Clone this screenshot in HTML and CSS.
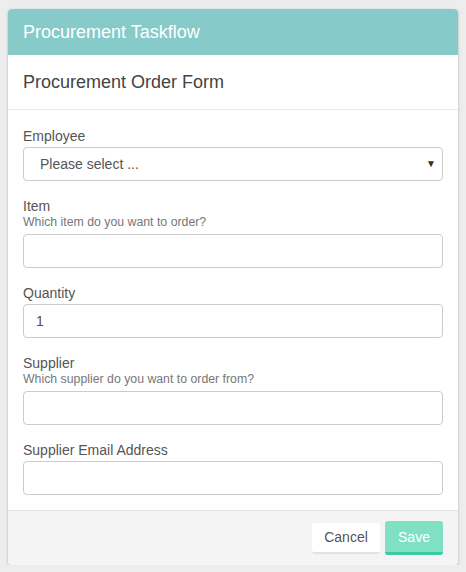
FILE: index.html
```html
<!DOCTYPE html>
<html>
<head>
<meta charset="utf-8">
<link rel="stylesheet" href="styles.css">
</head>
<body>
<div class="card">
  <div class="card-header">Procurement Taskflow</div>
  <div class="card-subheader">Procurement Order Form</div>
  <form class="card-body">
    <div class="form-group">
      <label class="label">Employee</label>
      <div class="select-wrap">
        <select class="control select"><option>Please select ...</option></select>
        <span class="caret">▼</span>
      </div>
    </div>
    <div class="form-group">
      <label class="label">Item</label>
      <div class="help">Which item do you want to order?</div>
      <input class="control" type="text">
    </div>
    <div class="form-group">
      <label class="label">Quantity</label>
      <input class="control qty" type="text" value="1">
    </div>
    <div class="form-group">
      <label class="label">Supplier</label>
      <div class="help">Which supplier do you want to order from?</div>
      <input class="control" type="text">
    </div>
    <div class="form-group">
      <label class="label">Supplier Email Address</label>
      <input class="control" type="text">
    </div>
  </form>
  <div class="card-footer">
    <button class="btn btn-cancel" type="button">Cancel</button>
    <button class="btn btn-save" type="button">Save</button>
  </div>
</div>
</body>
</html>
```
FILE: styles.css
```css
html, body {
  margin: 0;
  padding: 0;
}
body {
  background: #ededed;
  font-family: "Liberation Sans", Arial, sans-serif;
  color: #555;
  padding: 9px 8px 0 8px;
}
.card {
  width: 450px;
  background: #fff;
  border-radius: 4px;
  box-shadow: 0 1px 3px rgba(0,0,0,0.25);
  overflow: hidden;
}
.card-header {
  height: 46px;
  line-height: 46px;
  background: #86cbca;
  color: #fff;
  font-size: 18px;
  padding: 0 15px;
}
.card-subheader {
  height: 54px;
  line-height: 54px;
  padding: 0 15px;
  font-size: 18px;
  color: #444;
  border-bottom: 1px solid #e8e8e8;
}
.card-body {
  display: block;
  margin: 0;
  padding: 16px 15px 0 15px;
}
.form-group {
  display: flex;
  flex-direction: column;
  margin-bottom: 15px;
}
.label {
  font-size: 14px;
  line-height: 20px;
  color: #555;
  margin-bottom: 1px;
}
.help {
  font-size: 12.3px;
  line-height: 14px;
  color: #777;
  margin-top: -2px;
  margin-bottom: 5px;
}
.control {
  box-sizing: border-box;
  width: 420px;
  height: 34px;
  border: 1px solid #cccccc;
  border-radius: 4px;
  background: #fff;
  font-family: "Liberation Sans", Arial, sans-serif;
  font-size: 14px;
  color: #555;
  padding: 0 12px;
  margin: 0;
  outline: none;
}
.qty {
  color: #5a4a42;
}
.select-wrap {
  position: relative;
  width: 420px;
}
.select {
  -webkit-appearance: none;
  appearance: none;
  padding-left: 16px;
}
.caret {
  position: absolute;
  right: 7px;
  top: 7px;
  font-size: 10px;
  line-height: 20px;
  color: #333;
  pointer-events: none;
}
.card-footer {
  height: 54px;
  border-top: 1px solid #e3e3e3;
  background: #f4f4f4;
  display: flex;
  justify-content: flex-end;
  align-items: center;
  gap: 5px;
  padding: 0 15px;
}
.btn {
  font-family: "Liberation Sans", Arial, sans-serif;
  font-size: 14px;
  border: none;
  border-radius: 3px;
  padding: 0 12px;
  cursor: pointer;
}
.btn-cancel {
  height: 31px;
  width: 68px;
  background: #fff;
  color: #555;
  border-bottom: 2px solid #e2e2e2;
}
.btn-save {
  height: 34px;
  width: 58px;
  background: #7fe0c3;
  color: #fff;
  border-bottom: 3px solid #3ccaa0;
}
```
